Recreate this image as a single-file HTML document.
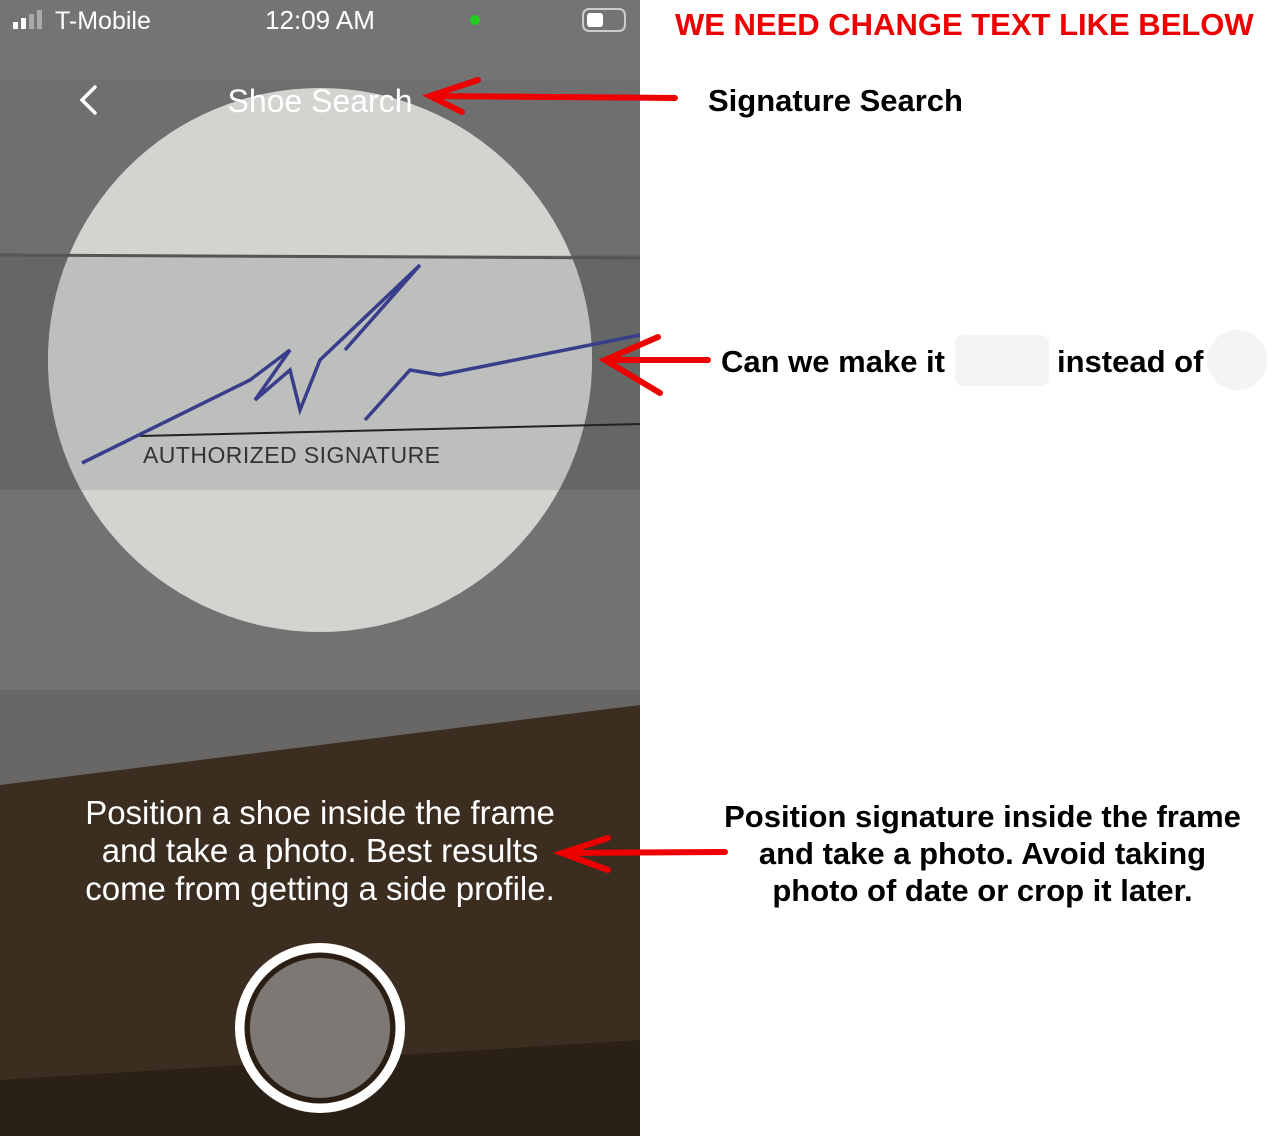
<!DOCTYPE html>
<html><head><style>
body{margin:0;width:1280px;height:1136px;background:#fff;position:relative;overflow:hidden;font-family:"Liberation Sans",sans-serif}
.a{position:absolute;font-weight:bold;color:#000;white-space:nowrap}
</style></head><body>
<svg width="640" height="1136" style="position:absolute;left:0;top:0">
<rect width="640" height="1136" fill="#6f6f6f"/>
<rect x="0" y="0" width="640" height="80" fill="#747474"/>
<rect x="0" y="255" width="640" height="235" fill="#656765"/>
<rect x="0" y="490" width="640" height="200" fill="#727272"/>
<polygon points="0,690 640,690 640,705 0,785" fill="#696766"/>
<polygon points="0,785 640,705 640,1136 0,1136" fill="#3b2d1f"/>
<polygon points="0,1080 640,1040 640,1136 0,1136" fill="#2a2016"/>
<circle cx="320" cy="360" r="272" fill="#d5d3cf"/>
<clipPath id="c"><circle cx="320" cy="360" r="272"/></clipPath>
<rect x="0" y="255" width="640" height="235" fill="#bcbfbb" clip-path="url(#c)"/>
<line x1="0" y1="255" x2="640" y2="258" stroke="#555" stroke-width="3"/>
<line x1="140" y1="436" x2="640" y2="424" stroke="#222" stroke-width="2"/>
<text x="143" y="463" font-size="23" fill="#333" font-family="Liberation Sans" textLength="297">AUTHORIZED SIGNATURE</text>
<path d="M82 463 L250 380 L290 350 L255 400 L290 370 L300 410 L320 360 L420 265 L345 350 M365 420 L410 370 L440 375 L640 335" stroke="#3a3d8c" stroke-width="3.5" fill="none"/>
<text x="320" y="112" font-size="32" fill="#fff" text-anchor="middle">Shoe Search</text>
<path d="M95 87 L82 100 L95 113" stroke="#fff" stroke-width="3.5" fill="none" stroke-linecap="round"/>
<text x="55" y="29" font-size="25" fill="#fff">T-Mobile</text>
<text x="320" y="29" font-size="26" fill="#fff" text-anchor="middle">12:09 AM</text>
<rect x="13" y="22" width="5" height="7" fill="#fff"/><rect x="21" y="18" width="5" height="11" fill="#fff"/><rect x="29" y="14" width="5" height="15" fill="#aaa"/><rect x="37" y="10" width="5" height="19" fill="#aaa"/>
<circle cx="475" cy="20" r="5" fill="#2c2"/>
<rect x="583" y="9" width="42" height="22" rx="6" fill="none" stroke="#ccc" stroke-width="2"/><rect x="587" y="13" width="16" height="14" rx="3" fill="#fff"/>
<text x="320" y="824" font-size="33" fill="#fff" text-anchor="middle">Position a shoe inside the frame</text>
<text x="320" y="862" font-size="33" fill="#fff" text-anchor="middle">and take a photo. Best results</text>
<text x="320" y="900" font-size="33" fill="#fff" text-anchor="middle">come from getting a side profile.</text>
<circle cx="320" cy="1028" r="80" fill="none" stroke="#fff" stroke-width="10"/>
<circle cx="320" cy="1028" r="73" fill="none" stroke="#2a1e14" stroke-width="5"/>
<circle cx="320" cy="1028" r="70" fill="#7d7874"/>
</svg>
<svg width="1280" height="1136" style="position:absolute;left:0;top:0">
<g stroke="#e00" stroke-width="6" fill="none" stroke-linecap="round">
<path d="M675 98 L430 96 M478 80 L430 96 L462 112"/>
<path d="M708 360 L605 360 M658 337 L605 360 L660 393"/>
<path d="M725 852 L562 853 M608 838 L562 853 L608 870"/>
</g>
<rect x="955" y="335" width="94" height="51" rx="8" fill="#f4f4f4"/>
<circle cx="1237" cy="360" r="30" fill="#f4f4f4"/>
</svg>
<div class="a" style="left:675px;top:7px;font-size:31px;color:#e00">WE NEED CHANGE TEXT LIKE BELOW</div>
<div class="a" style="left:708px;top:83px;font-size:31px">Signature Search</div>
<div class="a" style="left:721px;top:344px;font-size:31px">Can we make it</div>
<div class="a" style="left:1057px;top:344px;font-size:31px">instead of</div>
<div class="a" style="left:700px;top:798px;width:565px;text-align:center;font-size:31px;line-height:37px">Position signature inside the frame<br>and take a photo. Avoid taking<br>photo of date or crop it later.</div>
</body></html>
